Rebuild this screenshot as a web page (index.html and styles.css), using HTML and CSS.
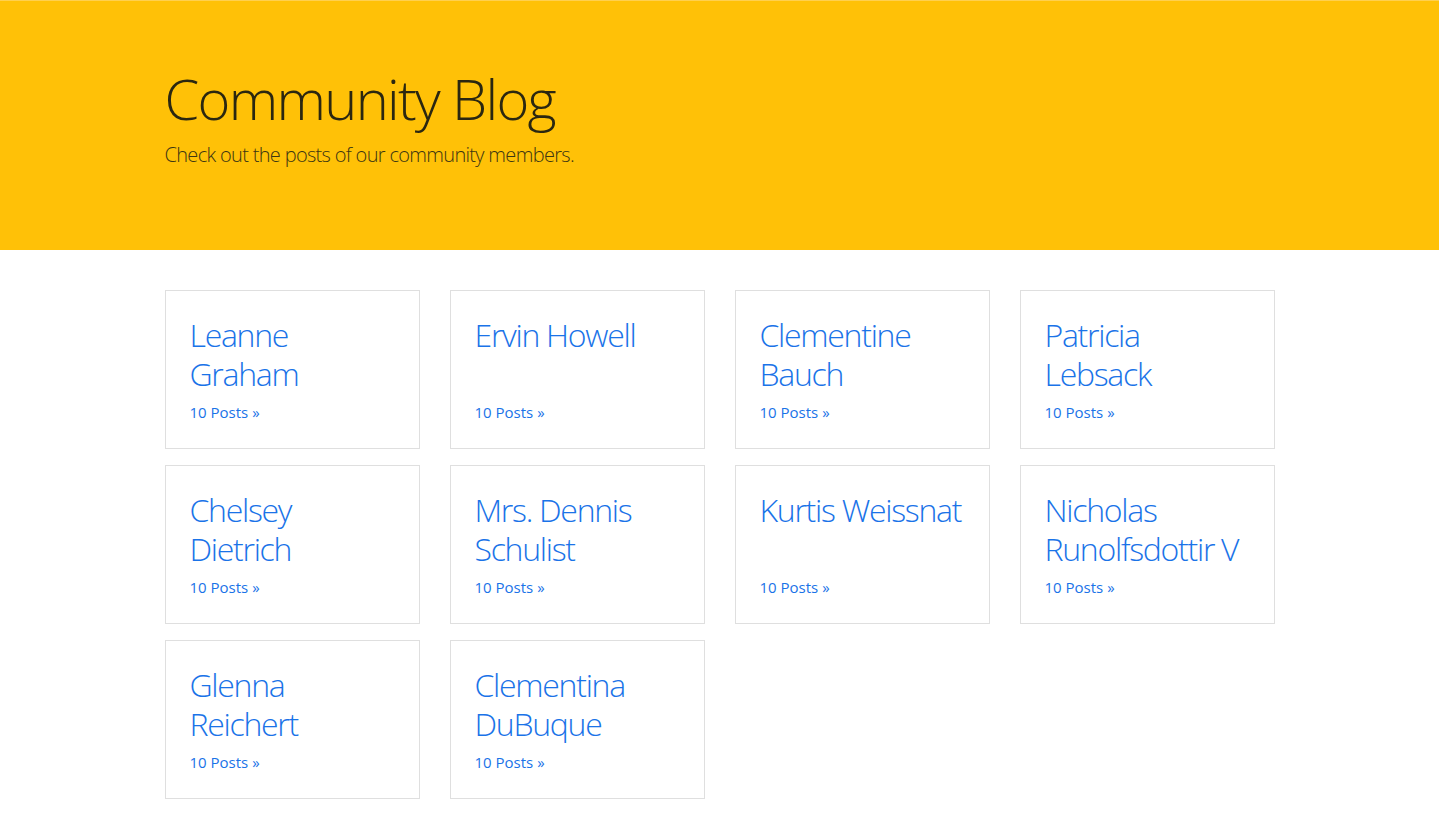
FILE: index.html
```html
<!DOCTYPE html>
<html lang="en">
<head>
<meta charset="utf-8">
<title>Community Blog</title>
<link rel="stylesheet" href="styles.css">
</head>
<body>
<header class="hero">
  <div class="container">
    <h1 class="hero-title">Community Blog</h1>
    <p class="hero-lead">Check out the posts of our community members.</p>
  </div>
</header>
<main class="container">
  <div class="grid">
    <article class="card"><h2 class="card-title"><a href="#">Leanne Graham</a></h2><a class="card-link" href="#">10 Posts &raquo;</a></article>
    <article class="card"><h2 class="card-title"><a href="#">Ervin Howell</a></h2><a class="card-link" href="#">10 Posts &raquo;</a></article>
    <article class="card"><h2 class="card-title"><a href="#">Clementine Bauch</a></h2><a class="card-link" href="#">10 Posts &raquo;</a></article>
    <article class="card"><h2 class="card-title"><a href="#">Patricia Lebsack</a></h2><a class="card-link" href="#">10 Posts &raquo;</a></article>
    <article class="card"><h2 class="card-title"><a href="#">Chelsey Dietrich</a></h2><a class="card-link" href="#">10 Posts &raquo;</a></article>
    <article class="card"><h2 class="card-title"><a href="#">Mrs. Dennis Schulist</a></h2><a class="card-link" href="#">10 Posts &raquo;</a></article>
    <article class="card"><h2 class="card-title"><a href="#">Kurtis Weissnat</a></h2><a class="card-link" href="#">10 Posts &raquo;</a></article>
    <article class="card"><h2 class="card-title"><a href="#">Nicholas Runolfsdottir V</a></h2><a class="card-link" href="#">10 Posts &raquo;</a></article>
    <article class="card"><h2 class="card-title"><a href="#">Glenna Reichert</a></h2><a class="card-link" href="#">10 Posts &raquo;</a></article>
    <article class="card"><h2 class="card-title"><a href="#">Clementina DuBuque</a></h2><a class="card-link" href="#">10 Posts &raquo;</a></article>
  </div>
</main>
</body>
</html>
```
FILE: styles.css
```css
* { box-sizing: border-box; }
html, body { margin: 0; padding: 0; }
body {
  font-family: "Open Sans", "Noto Sans", sans-serif;
  font-weight: 300;
  color: #212529;
  background: #fff;
}
a { color: #1a73e8; text-decoration: none; }
.container {
  width: 1110px;
  margin: 0 auto;
}
.hero {
  background: #ffc107;
  border-top: 1px solid #ffd04f;
  padding: 64px 0;
  margin-bottom: 40px;
}
.hero-title {
  margin: 0 0 8px;
  font-size: 56px;
  font-weight: 300;
  line-height: 67.2px;
  letter-spacing: -0.03em;
  color: #2b2710;
}
.hero-lead {
  margin: 0 0 16px;
  font-size: 20px;
  line-height: 30px;
  font-weight: 300;
  letter-spacing: -0.034em;
  color: #3d3612;
}
.grid {
  display: grid;
  grid-template-columns: repeat(4, 255px);
  column-gap: 30px;
  row-gap: 16px;
}
.card {
  border: 1px solid #dfdfdf;
  padding: 25px 24px 24px;
  display: flex;
  flex-direction: column;
  min-height: 159px;
}
.card-title {
  margin: 0 0 8px;
  font-size: 32px;
  font-weight: 300;
  line-height: 38.5px;
  letter-spacing: -0.04em;
}
.card-link {
  margin-top: auto;
  font-size: 15px;
  line-height: 23px;
  font-weight: 400;
}
```
